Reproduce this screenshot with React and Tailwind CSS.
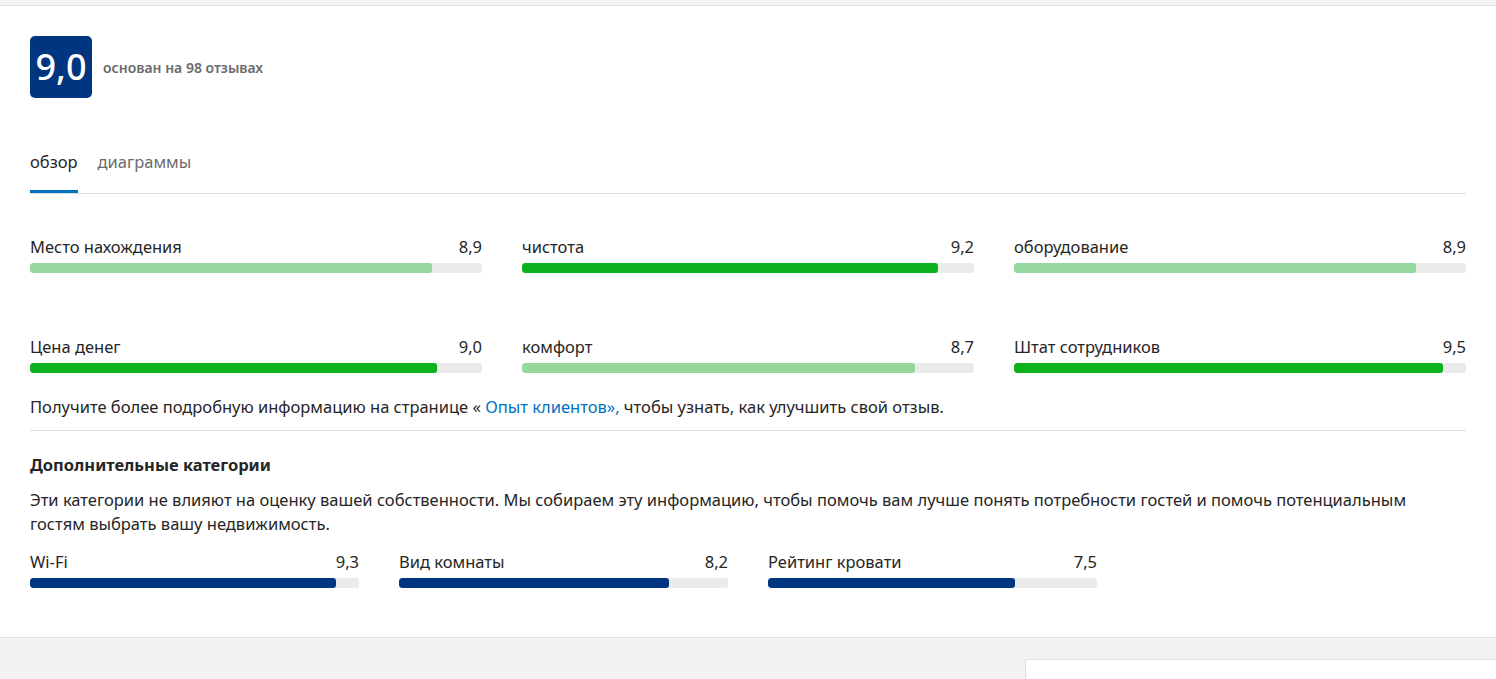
const main = [
  [
    { label: "Место нахождения", score: 8.9, strong: false },
    { label: "чистота", score: 9.2, strong: true },
    { label: "оборудование", score: 8.9, strong: false },
  ],
  [
    { label: "Цена денег", score: 9.0, strong: true },
    { label: "комфорт", score: 8.7, strong: false },
    { label: "Штат сотрудников", score: 9.5, strong: true },
  ],
];

const extra = [
  { label: "Wi-Fi", score: 9.3 },
  { label: "Вид комнаты", score: 8.2 },
  { label: "Рейтинг кровати", score: 7.5 },
];

const fmt = (n) => n.toFixed(1).replace(".", ",");

const Bar = ({ label, score, fill }) => (
  <div>
    <div className="flex justify-between text-[16.5px] leading-6 text-[#262626]">
      <span>{label}</span>
      <span>{fmt(score)}</span>
    </div>
    <div className="mt-1 h-[10px] rounded-[3px] bg-[#ebebeb] overflow-hidden">
      <div className={`h-full rounded-[3px] ${fill}`} style={{ width: `${score * 10}%` }} />
    </div>
  </div>
);

export default function App() {
  return (
    <div
      className="min-h-screen bg-[#f2f2f2] pt-[5px]"
      style={{ fontFamily: '"Noto Sans", "Open Sans", sans-serif' }}
    >
      <div className="bg-white border-t border-b border-[#e0e0e0] px-[30px] pt-[30px] pb-[49px]">
        {/* score */}
        <div className="flex items-center gap-[11px]">
          <div className="w-[62px] h-[62px] rounded-[5px] bg-[#003580] flex items-center justify-center text-white text-[36px] font-medium leading-none">
            9,0
          </div>
          <span className="text-[14px] font-semibold text-[#6b6b6b]">основан на 98 отзывах</span>
        </div>

        {/* tabs */}
        <div className="mt-[52px] flex gap-5 border-b border-[#e0e0e0]">
          <div className="pb-4 border-b-[3px] border-[#0071c2] text-[16.5px] leading-6 text-[#262626]">обзор</div>
          <div className="pb-4 border-b-[3px] border-transparent text-[16.5px] leading-6 text-[#6b6b6b]">диаграммы</div>
        </div>

        {/* main ratings */}
        <div className="mt-[41px] flex flex-col gap-[62px]">
          {main.map((row, i) => (
            <div key={i} className="grid grid-cols-3 gap-10">
              {row.map((r) => (
                <Bar key={r.label} {...r} fill={r.strong ? "bg-[#0cb21e]" : "bg-[#97d89e]"} />
              ))}
            </div>
          ))}
        </div>

        <p className="mt-[22px] text-[16.5px] leading-6 text-[#262626]">
          Получите более подробную информацию на странице « <a className="text-[#0071c2]">Опыт клиентов»,</a> чтобы узнать, как улучшить свой отзыв.
        </p>

        <div className="mt-[11px] border-t border-[#e0e0e0]" />

        <h3 className="mt-[22px] text-[16.5px] leading-6 font-bold text-[#262626]">Дополнительные категории</h3>
        <p className="mt-[11px] text-[16.5px] leading-6 text-[#262626] max-w-[1400px]">
          Эти категории не влияют на оценку вашей собственности. Мы собираем эту информацию, чтобы помочь вам лучше понять потребности гостей и помочь потенциальным гостям выбрать вашу недвижимость.
        </p>

        <div className="mt-[14px] flex gap-10">
          {extra.map((r) => (
            <div key={r.label} className="w-[329px]">
              <Bar {...r} fill="bg-[#003580]" />
            </div>
          ))}
        </div>
      </div>

      <div className="flex justify-end pt-[21px]">
        <div className="w-[471px] h-[40px] bg-white border-t border-l border-[#e0e0e0]" />
      </div>
    </div>
  );
}
